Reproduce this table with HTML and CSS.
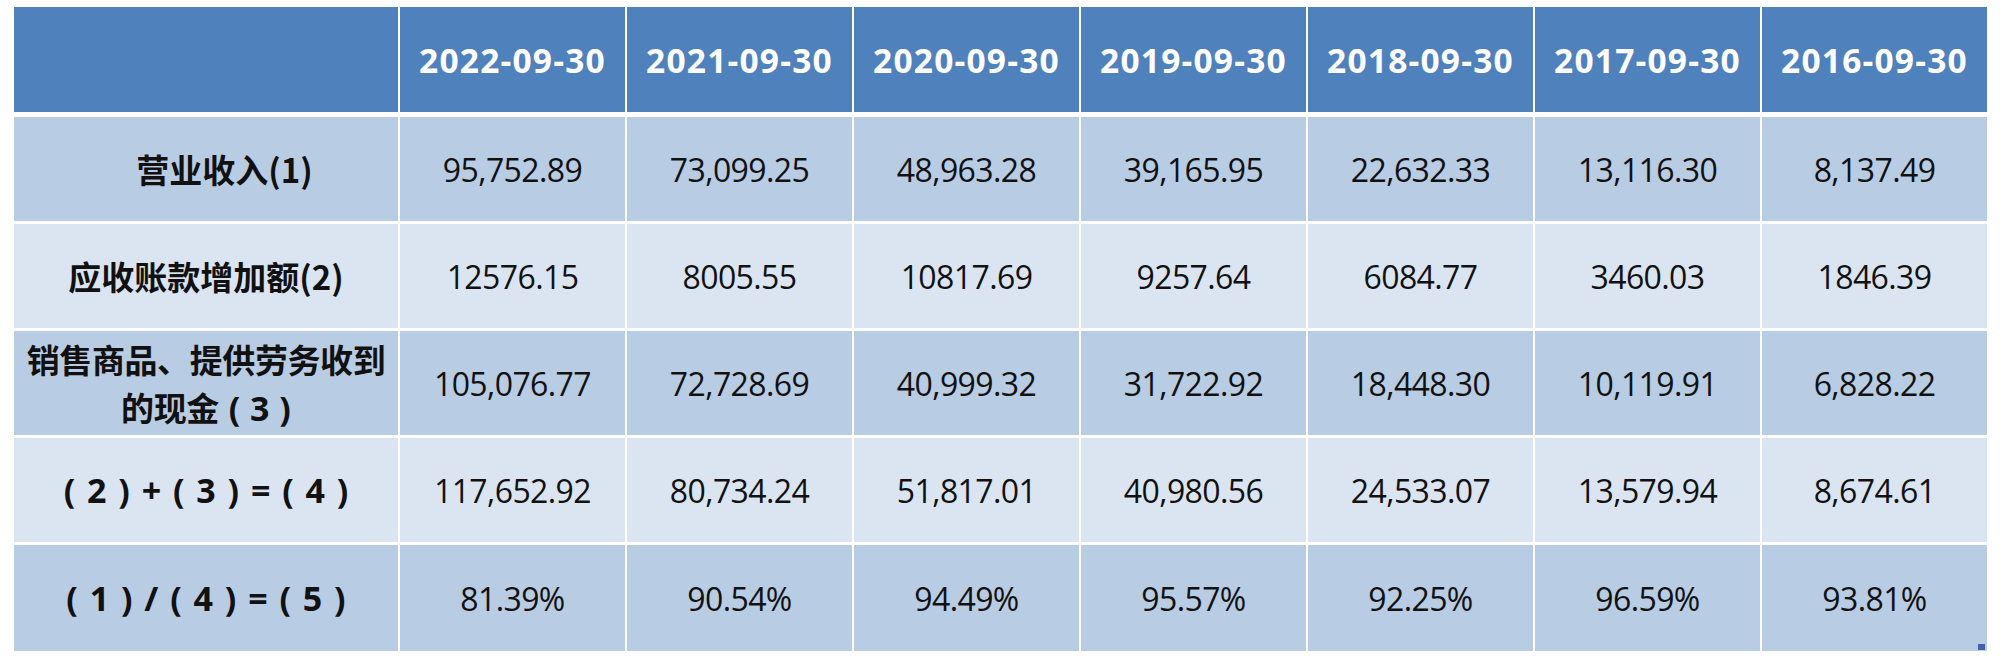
FILE: index.html
```html
<!DOCTYPE html>
<html lang="zh-CN">
<head>
<meta charset="utf-8">
<title>营业收入与现金</title>
<link rel="stylesheet" href="styles.css">
</head>
<body>
<div class="page">
  <div class="table">
    <div class="row head">
      <div class="cell label"></div>
      <div class="cell">2022-09-30</div>
      <div class="cell">2021-09-30</div>
      <div class="cell">2020-09-30</div>
      <div class="cell">2019-09-30</div>
      <div class="cell">2018-09-30</div>
      <div class="cell">2017-09-30</div>
      <div class="cell">2016-09-30</div>
    </div>
    <div class="row dark">
      <div class="cell label shift">营业收入(1)</div>
      <div class="cell">95,752.89</div>
      <div class="cell">73,099.25</div>
      <div class="cell">48,963.28</div>
      <div class="cell">39,165.95</div>
      <div class="cell">22,632.33</div>
      <div class="cell">13,116.30</div>
      <div class="cell">8,137.49</div>
    </div>
    <div class="row light">
      <div class="cell label">应收账款增加额(2)</div>
      <div class="cell">12576.15</div>
      <div class="cell">8005.55</div>
      <div class="cell">10817.69</div>
      <div class="cell">9257.64</div>
      <div class="cell">6084.77</div>
      <div class="cell">3460.03</div>
      <div class="cell">1846.39</div>
    </div>
    <div class="row dark">
      <div class="cell label two"><span>销售商品、提供劳务收到<br>的现金<span class="formula"> ( 3 )</span></span></div>
      <div class="cell">105,076.77</div>
      <div class="cell">72,728.69</div>
      <div class="cell">40,999.32</div>
      <div class="cell">31,722.92</div>
      <div class="cell">18,448.30</div>
      <div class="cell">10,119.91</div>
      <div class="cell">6,828.22</div>
    </div>
    <div class="row light">
      <div class="cell label formula">( 2 ) + ( 3 ) = ( 4 )</div>
      <div class="cell">117,652.92</div>
      <div class="cell">80,734.24</div>
      <div class="cell">51,817.01</div>
      <div class="cell">40,980.56</div>
      <div class="cell">24,533.07</div>
      <div class="cell">13,579.94</div>
      <div class="cell">8,674.61</div>
    </div>
    <div class="row dark last">
      <div class="cell label formula">( 1 ) / ( 4 ) = ( 5 )</div>
      <div class="cell">81.39%</div>
      <div class="cell">90.54%</div>
      <div class="cell">94.49%</div>
      <div class="cell">95.57%</div>
      <div class="cell">92.25%</div>
      <div class="cell">96.59%</div>
      <div class="cell">93.81%</div>
    </div>
    <div class="handle"></div>
  </div>
</div>
</body>
</html>
```
FILE: styles.css
```css
html, body {
  margin: 0;
  padding: 0;
  background: #ffffff;
}

.page {
  padding: 7px 0 0 14px;
}

.table {
  position: relative;
  display: flex;
  flex-direction: column;
  gap: 3px;
  width: 1973px;
  background: #ffffff;
}

.row {
  display: grid;
  grid-template-columns: 384px repeat(7, 225px);
  column-gap: 2px;
  height: 104px;
}

.cell {
  display: flex;
  align-items: center;
  justify-content: center;
  text-align: center;
  font-family: "Open Sans", "Noto Sans CJK SC", sans-serif;
  font-size: 32px;
  letter-spacing: -0.6px;
  color: #111111;
}

.head {
  height: 105px;
  margin-bottom: 2px;
}

.head .cell {
  background: #4f81bd;
  color: #ffffff;
  font-weight: 700;
  font-size: 33.5px;
  letter-spacing: 1.2px;
}

.dark .cell {
  background: #b8cce4;
}

.light .cell {
  background: #dbe5f1;
}

.last {
  height: 106px;
}

.label {
  font-family: "Noto Sans CJK SC", "Open Sans", sans-serif;
  font-weight: 700;
  font-size: 33px;
  letter-spacing: 0;
  line-height: 48px;
}

.shift {
  padding-left: 37px;
}

.two {
  letter-spacing: -0.4px;
}

.formula {
  font-family: "Open Sans", sans-serif;
  font-weight: 700;
  font-size: 34px;
  letter-spacing: 0;
  word-spacing: 3px;
}

.two .formula {
  word-spacing: 1px;
}

.handle {
  position: absolute;
  right: 2px;
  bottom: 1px;
  width: 7px;
  height: 6px;
  background: #4660b0;
}
```
